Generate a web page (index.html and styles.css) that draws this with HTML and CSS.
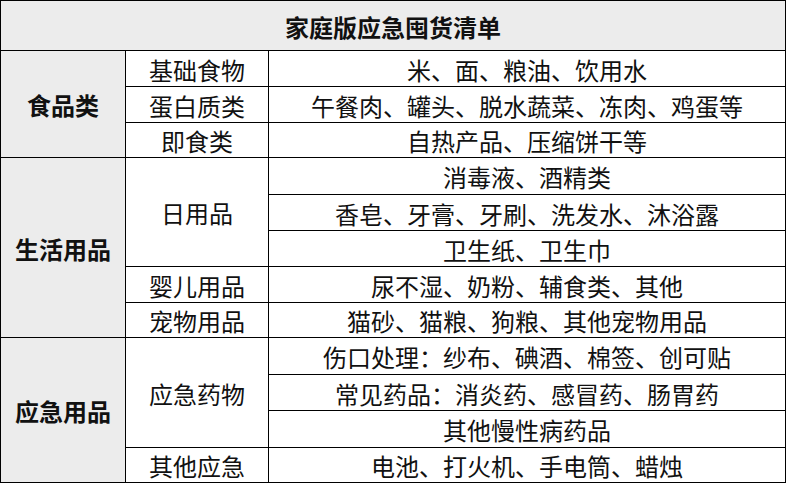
FILE: index.html
```html
<!DOCTYPE html>
<html lang="zh-CN">
<head>
<meta charset="utf-8">
<title>家庭版应急囤货清单</title>
<link rel="stylesheet" href="styles.css">
</head>
<body>
<div class="sheet">
  <div class="cell title">家庭版应急囤货清单</div>

  <div class="cell cat span3">食品类</div>
  <div class="cell sub">基础食物</div>
  <div class="cell item">米、面、粮油、饮用水</div>
  <div class="cell sub">蛋白质类</div>
  <div class="cell item">午餐肉、罐头、脱水蔬菜、冻肉、鸡蛋等</div>
  <div class="cell sub">即食类</div>
  <div class="cell item">自热产品、压缩饼干等</div>

  <div class="cell cat span5">生活用品</div>
  <div class="cell sub span3">日用品</div>
  <div class="cell item">消毒液、酒精类</div>
  <div class="cell item">香皂、牙膏、牙刷、洗发水、沐浴露</div>
  <div class="cell item">卫生纸、卫生巾</div>
  <div class="cell sub">婴儿用品</div>
  <div class="cell item">尿不湿、奶粉、辅食类、其他</div>
  <div class="cell sub">宠物用品</div>
  <div class="cell item">猫砂、猫粮、狗粮、其他宠物用品</div>

  <div class="cell cat span4">应急用品</div>
  <div class="cell sub span3">应急药物</div>
  <div class="cell item">伤口处理：纱布、碘酒、棉签、创可贴</div>
  <div class="cell item">常见药品：消炎药、感冒药、肠胃药</div>
  <div class="cell item">其他慢性病药品</div>
  <div class="cell sub">其他应急</div>
  <div class="cell item">电池、打火机、手电筒、蜡烛</div>
</div>
</body>
</html>
```
FILE: styles.css
```css
html, body {
  margin: 0;
  padding: 0;
  background: #ffffff;
}

.sheet {
  display: grid;
  width: 784px;
  grid-template-columns: 124px 142px 516px;
  grid-template-rows: 49px 35px 35px 34px 36px 35px 35px 35px 34px 36px 35px 36px 34px;
  gap: 1px;
  padding: 1px;
  background: #000000;
  font-family: "Noto Sans CJK SC", "Microsoft YaHei", sans-serif;
  font-size: 24px;
  color: #111111;
}

.cell {
  background: #ffffff;
  display: flex;
  align-items: center;
  justify-content: center;
  line-height: 1;
  padding-top: 2px;
  white-space: nowrap;
}

.title {
  grid-column: 1 / 4;
  background: #ececec;
  font-weight: 700;
}

.cat {
  grid-column: 1;
  background: #ececec;
  font-weight: 700;
}

.sub {
  grid-column: 2;
}

.item {
  grid-column: 3;
}

.span3 { grid-row: span 3; }
.span4 { grid-row: span 4; }
.span5 { grid-row: span 5; }
```
